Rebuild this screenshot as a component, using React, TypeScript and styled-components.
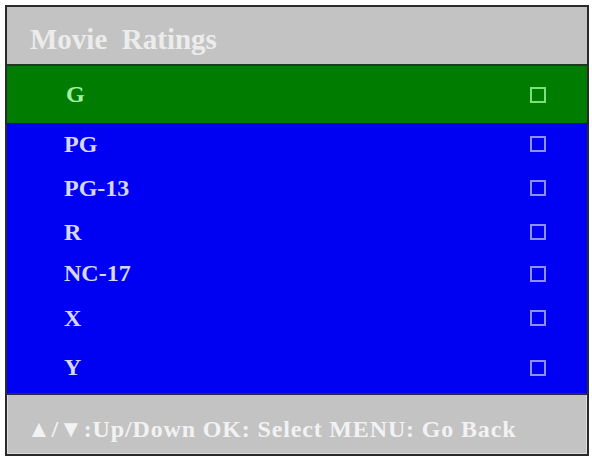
import React from 'react'
import styled, { createGlobalStyle } from 'styled-components'

const Global = createGlobalStyle`
  html, body {
    margin: 0;
    padding: 0;
    background: #ffffff;
  }
  body {
    font-family: "Liberation Serif", "Times New Roman", serif;
  }
`

const Screen = styled.div`
  width: 592px;
  height: 459px;
  padding: 5px 3px 3px 5px;
  box-sizing: border-box;
`

const Frame = styled.div`
  display: flex;
  flex-direction: column;
  height: 100%;
  border: 2px solid #2a2a2a;
  box-sizing: border-box;
  background: #c3c3c3;
`

const Header = styled.div`
  display: flex;
  align-items: center;
  height: 59px;
  padding: 8px 0 0 23px;
  box-sizing: border-box;
  border-bottom: 2px solid #1e3a1e;
  color: #ececec;
  font-weight: bold;
  font-size: 29px;
  white-space: pre;
`

const List = styled.div`
  display: flex;
  flex-direction: column;
  background: #0000f2;
  border-bottom: 2px solid #2a2a40;
`

const Row = styled.div<{ $h: number; $active?: boolean }>`
  display: flex;
  align-items: center;
  justify-content: space-between;
  height: ${p => p.$h}px;
  padding: 0 41px 0 ${p => (p.$active ? 59 : 57)}px;
  background: ${p => (p.$active ? '#007c00' : 'transparent')};
  color: ${p => (p.$active ? '#a6f0a6' : '#d6d6ff')};
  font-weight: bold;
  font-size: 24px;
`

const Box = styled.span<{ $active?: boolean }>`
  width: 16px;
  height: 16px;
  border: 2px solid ${p => (p.$active ? '#7ce07c' : '#8f8fff')};
  box-sizing: border-box;
`

const Footer = styled.div`
  display: flex;
  align-items: center;
  flex: 1;
  padding: 10px 0 0 19px;
  border: 1px solid #dcdcdc;
  border-top: none;
  color: #f2f2f2;
  font-weight: bold;
  font-size: 24px;
  letter-spacing: 0.85px;
`

const ratings = [
  { label: 'G', h: 57, active: true },
  { label: 'PG', h: 42 },
  { label: 'PG-13', h: 46 },
  { label: 'R', h: 42 },
  { label: 'NC-17', h: 41 },
  { label: 'X', h: 48 },
  { label: 'Y', h: 51 },
]

export default function App() {
  return (
    <Screen>
      <Global />
      <Frame>
        <Header>{'Movie  Ratings'}</Header>
        <List>
          {ratings.map(r => (
            <Row key={r.label} $h={r.h} $active={r.active}>
              <span>{r.label}</span>
              <Box $active={r.active} />
            </Row>
          ))}
        </List>
        <Footer>▲/▼:Up/Down OK: Select MENU: Go Back</Footer>
      </Frame>
    </Screen>
  )
}
